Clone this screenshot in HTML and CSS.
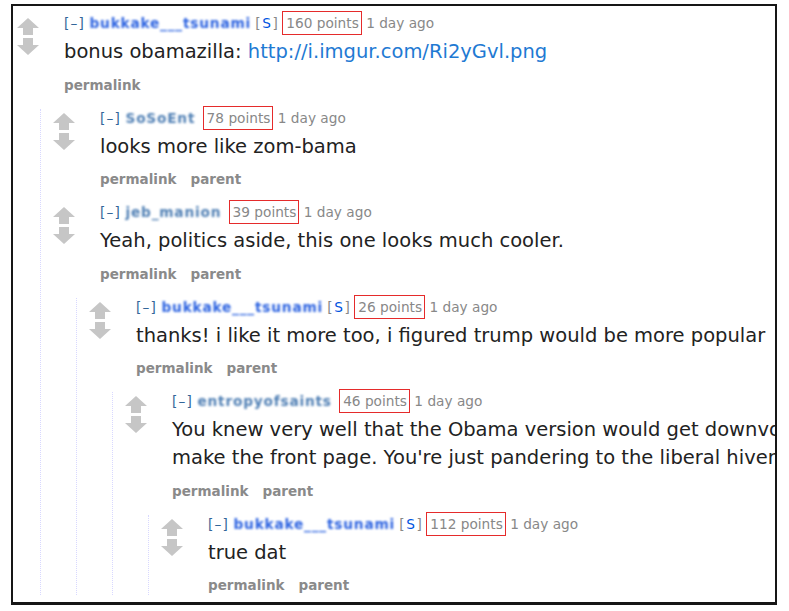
FILE: index.html
```html
<!DOCTYPE html>
<html>
<head>
<meta charset="utf-8">
<link rel="stylesheet" href="styles.css">
</head>
<body>
<div class="frame">
  <div class="comment top">
    <div class="row">
      <div class="midcol">
        <svg class="arrow" viewBox="0 0 22 17"><polygon points="11,0 22,10 16,10 16,17 6,17 6,10 0,10"/></svg>
        <svg class="arrow" viewBox="0 0 22 17"><polygon points="6,0 16,0 16,7 22,7 11,17 0,7 6,7"/></svg>
      </div>
      <div class="entry">
        <p class="tagline"><span class="expand">[–]</span> <span class="author submitter">bukkake___tsunami</span> <span class="flag">[<span class="s">S</span>]</span><span class="score">160 points</span> <span class="time">1 day ago</span></p>
        <div class="md">bonus obamazilla: <a class="link">http://i.imgur.com/Ri2yGvl.png</a></div>
        <ul class="buttons"><li>permalink</li></ul>
      </div>
    </div>
    <div class="child">
      <div class="comment">
        <div class="row">
          <div class="midcol">
            <svg class="arrow" viewBox="0 0 22 17"><polygon points="11,0 22,10 16,10 16,17 6,17 6,10 0,10"/></svg>
            <svg class="arrow" viewBox="0 0 22 17"><polygon points="6,0 16,0 16,7 22,7 11,17 0,7 6,7"/></svg>
          </div>
          <div class="entry">
            <p class="tagline"><span class="expand">[–]</span> <span class="author">SoSoEnt</span> <span class="score">78 points</span> <span class="time">1 day ago</span></p>
            <div class="md">looks more like zom-bama</div>
            <ul class="buttons"><li>permalink</li><li>parent</li></ul>
          </div>
        </div>
      </div>
      <div class="comment">
        <div class="row">
          <div class="midcol">
            <svg class="arrow" viewBox="0 0 22 17"><polygon points="11,0 22,10 16,10 16,17 6,17 6,10 0,10"/></svg>
            <svg class="arrow" viewBox="0 0 22 17"><polygon points="6,0 16,0 16,7 22,7 11,17 0,7 6,7"/></svg>
          </div>
          <div class="entry">
            <p class="tagline"><span class="expand">[–]</span> <span class="author">jeb_manion</span> <span class="score">39 points</span> <span class="time">1 day ago</span></p>
            <div class="md">Yeah, politics aside, this one looks much cooler.</div>
            <ul class="buttons"><li>permalink</li><li>parent</li></ul>
          </div>
        </div>
        <div class="child">
          <div class="comment">
            <div class="row">
              <div class="midcol">
                <svg class="arrow" viewBox="0 0 22 17"><polygon points="11,0 22,10 16,10 16,17 6,17 6,10 0,10"/></svg>
                <svg class="arrow" viewBox="0 0 22 17"><polygon points="6,0 16,0 16,7 22,7 11,17 0,7 6,7"/></svg>
              </div>
              <div class="entry">
                <p class="tagline"><span class="expand">[–]</span> <span class="author submitter">bukkake___tsunami</span> <span class="flag">[<span class="s">S</span>]</span><span class="score">26 points</span> <span class="time">1 day ago</span></p>
                <div class="md">thanks! i like it more too, i figured trump would be more popular</div>
                <ul class="buttons"><li>permalink</li><li>parent</li></ul>
              </div>
            </div>
            <div class="child">
              <div class="comment">
                <div class="row">
                  <div class="midcol">
                    <svg class="arrow" viewBox="0 0 22 17"><polygon points="11,0 22,10 16,10 16,17 6,17 6,10 0,10"/></svg>
                    <svg class="arrow" viewBox="0 0 22 17"><polygon points="6,0 16,0 16,7 22,7 11,17 0,7 6,7"/></svg>
                  </div>
                  <div class="entry">
                    <p class="tagline"><span class="expand">[–]</span> <span class="author">entropyofsaints</span> <span class="score">46 points</span> <span class="time">1 day ago</span></p>
                    <div class="md">You knew very well that the Obama version would get downvoted to hell and<br>make the front page. You're just pandering to the liberal hivemind.</div>
                    <ul class="buttons"><li>permalink</li><li>parent</li></ul>
                  </div>
                </div>
                <div class="child">
                  <div class="comment">
                    <div class="row">
                      <div class="midcol">
                        <svg class="arrow" viewBox="0 0 22 17"><polygon points="11,0 22,10 16,10 16,17 6,17 6,10 0,10"/></svg>
                        <svg class="arrow" viewBox="0 0 22 17"><polygon points="6,0 16,0 16,7 22,7 11,17 0,7 6,7"/></svg>
                      </div>
                      <div class="entry">
                        <p class="tagline"><span class="expand">[–]</span> <span class="author submitter">bukkake___tsunami</span> <span class="flag">[<span class="s">S</span>]</span><span class="score">112 points</span> <span class="time">1 day ago</span></p>
                        <div class="md">true dat</div>
                        <ul class="buttons"><li>permalink</li><li>parent</li></ul>
                      </div>
                    </div>
                  </div>
                </div>
              </div>
            </div>
          </div>
        </div>
      </div>
    </div>
  </div>
</div>
</body>
</html>
```
FILE: styles.css
```css
html, body {
  margin: 0;
  padding: 0;
  background: #fff;
}
body {
  font-family: "DejaVu Sans", Verdana, sans-serif;
}
.frame {
  box-sizing: border-box;
  margin: 4px 0 0 11px;
  width: 766px;
  height: 601px;
  border: 2px solid #161616;
  border-bottom-width: 3px;
  padding-top: 8px;
  overflow: hidden;
  white-space: nowrap;
}
.comment {
  margin-top: 14px;
  padding-left: 8px;
}
.comment.top {
  margin-top: 0;
  padding-left: 0;
}
.row {
  display: flex;
  align-items: flex-start;
}
.midcol {
  width: 30px;
  flex: none;
  display: flex;
  flex-direction: column;
  align-items: center;
  gap: 3px;
  padding-top: 4px;
}
.arrow {
  width: 22px;
  height: 17px;
  display: block;
  fill: #c6c6c6;
}
.entry {
  margin-left: 21px;
}
.tagline {
  margin: 0;
  font-size: 13.7px;
  line-height: 18px;
  height: 18px;
  color: #888;
}
.expand {
  color: #369;
  letter-spacing: 1.2px;
}
.author {
  font-weight: bold;
  color: #4f7fb4;
  filter: blur(1.3px);
  letter-spacing: 0.8px;
}
.author.submitter {
  color: #2b62e0;
}
.flag {
  color: #888;
  letter-spacing: 1.5px;
}
.flag .s {
  color: #0055df;
}
.score {
  border: 1.5px solid #e52b2b;
  padding: 3px 2px 3px 3px;
  margin-left: 3px;
  color: #888;
}
.md {
  margin-top: 6px;
  font-size: 19.5px;
  line-height: 28px;
  color: #222;
}
.link {
  color: #1f7ad3;
}
.buttons {
  list-style: none;
  margin: 8.5px 0 0;
  padding: 0;
  display: flex;
  gap: 14px;
  font-size: 13.5px;
  line-height: 20px;
  font-weight: bold;
  color: #8a8a8a;
}
.child {
  margin-left: 27px;
  border-left: 1px dotted #d8d8ff;
}
```
